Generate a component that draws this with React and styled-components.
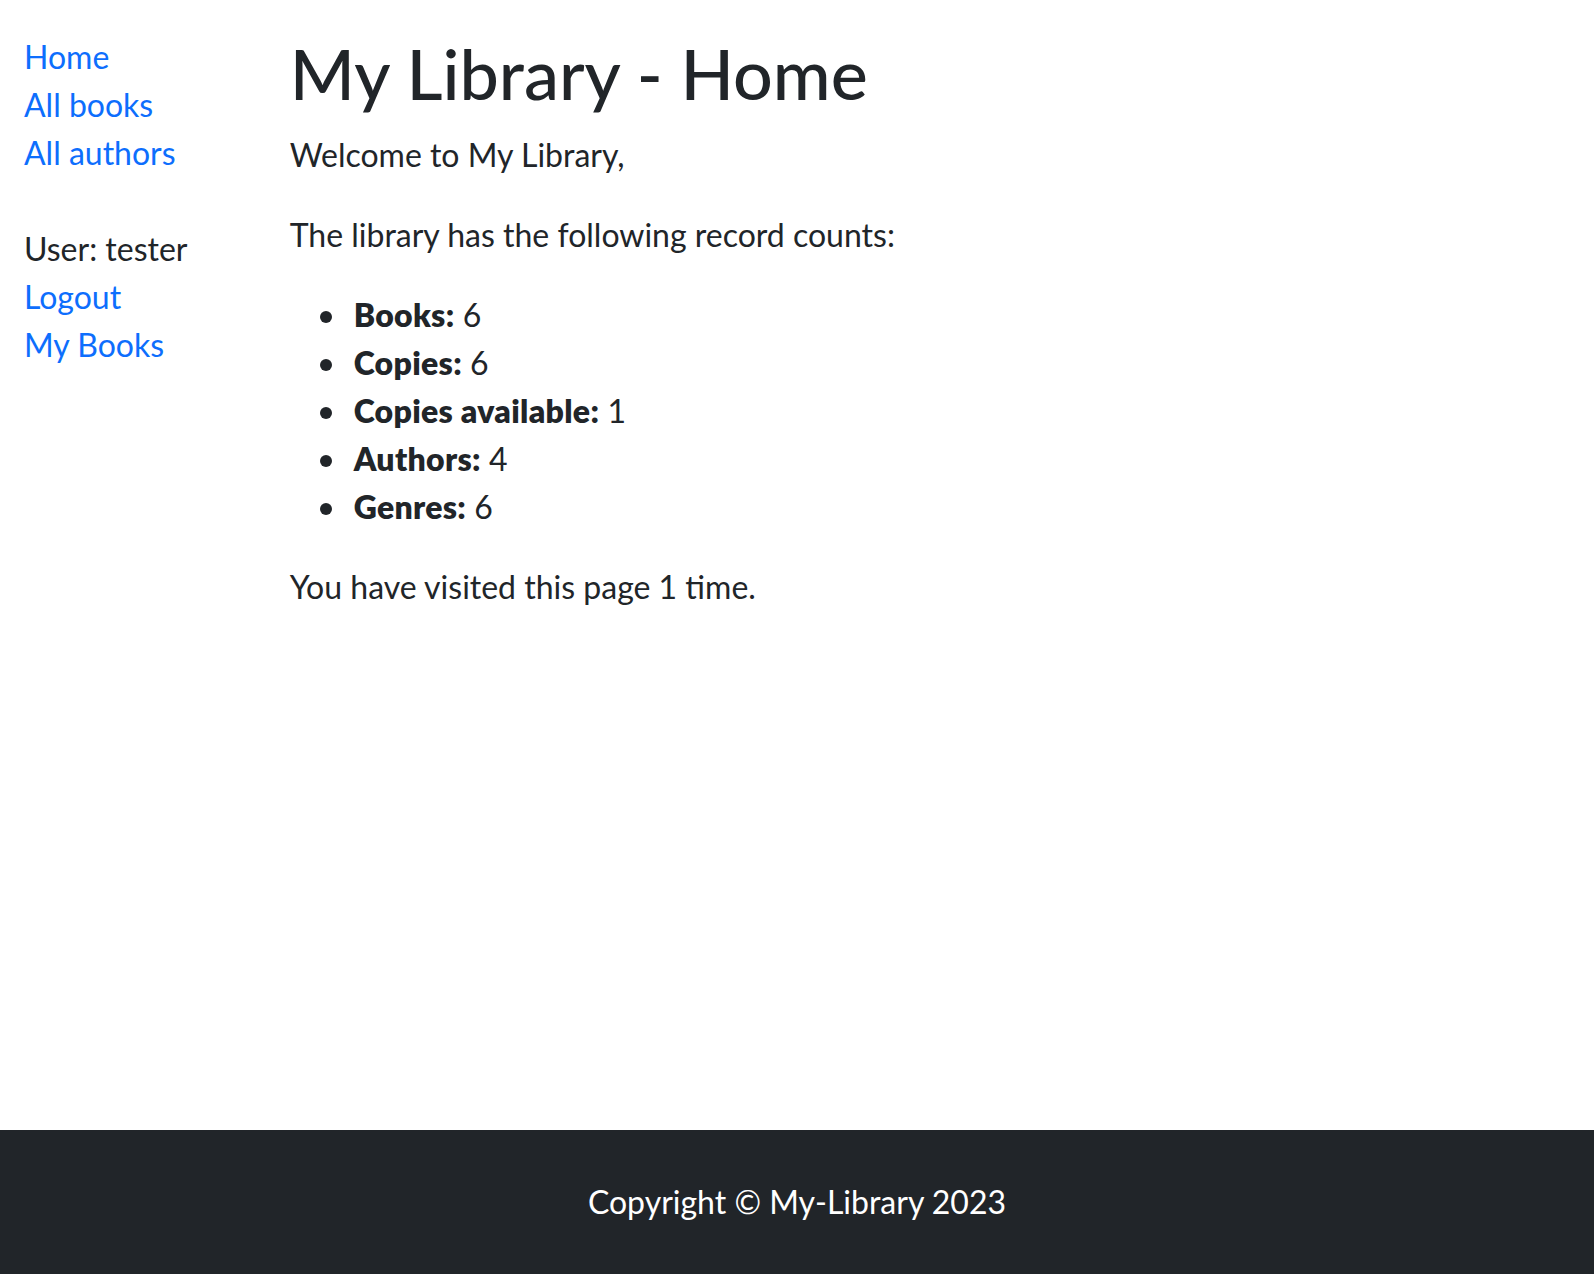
import styled, { createGlobalStyle } from "styled-components";

const GlobalStyle = createGlobalStyle`
  * {
    box-sizing: border-box;
  }
  body {
    margin: 0;
    font-family: Lato, "Open Sans", sans-serif;
    font-size: 32px;
    line-height: 1.5;
    color: #212529;
    background: #fff;
  }
`;

const Page = styled.div`
  min-height: 100vh;
  display: flex;
  flex-direction: column;
`;

const Row = styled.div`
  display: flex;
`;

const Sidebar = styled.div`
  width: 16.6667%;
  padding: 0 24px;
`;

const Content = styled.main`
  width: 83.3333%;
  padding: 0 24px;
`;

const NavList = styled.ul`
  list-style: none;
  padding: 0;
  margin: ${(props) => (props.$first ? "33px 0 0" : "48px 0 0")};
`;

const NavLink = styled.a`
  color: #0d6efd;
  text-decoration: none;
`;

const Title = styled.h1`
  font-size: 70px;
  font-weight: 500;
  line-height: 1.2;
  margin: 31px 0 16px;
`;

const Para = styled.p`
  margin: 0 0 32px;
`;

const Counts = styled.ul`
  margin: 0 0 32px;
  padding-left: 64px;
  list-style: none;
  strong {
    font-weight: 800;
    letter-spacing: 0.3px;
  }
`;

const CountItem = styled.li`
  position: relative;
  &::before {
    content: "";
    position: absolute;
    left: -34px;
    top: 20px;
    width: 12px;
    height: 12px;
    border-radius: 50%;
    background: currentColor;
  }
`;

const Footer = styled.footer`
  margin-top: auto;
  background: #212529;
  color: #fff;
  text-align: center;
  padding: 48px 0;
`;

const counts = [
  ["Books", 6],
  ["Copies", 6],
  ["Copies available", 1],
  ["Authors", 4],
  ["Genres", 6],
];

function App() {
  return (
    <Page>
      <GlobalStyle />
      <Row>
        <Sidebar>
          <NavList $first>
            <li><NavLink href="#">Home</NavLink></li>
            <li><NavLink href="#">All books</NavLink></li>
            <li><NavLink href="#">All authors</NavLink></li>
          </NavList>
          <NavList>
            <li>User: tester</li>
            <li><NavLink href="#">Logout</NavLink></li>
            <li><NavLink href="#">My Books</NavLink></li>
          </NavList>
        </Sidebar>
        <Content>
          <Title>My Library - Home</Title>
          <Para>Welcome to My Library,</Para>
          <Para>The library has the following record counts:</Para>
          <Counts>
            {counts.map(([label, n]) => (
              <CountItem key={label}>
                <strong>{label}:</strong> {n}
              </CountItem>
            ))}
          </Counts>
          <Para>You have visited this page 1 time.</Para>
        </Content>
      </Row>
      <Footer>Copyright © My-Library 2023</Footer>
    </Page>
  );
}

export default App;
